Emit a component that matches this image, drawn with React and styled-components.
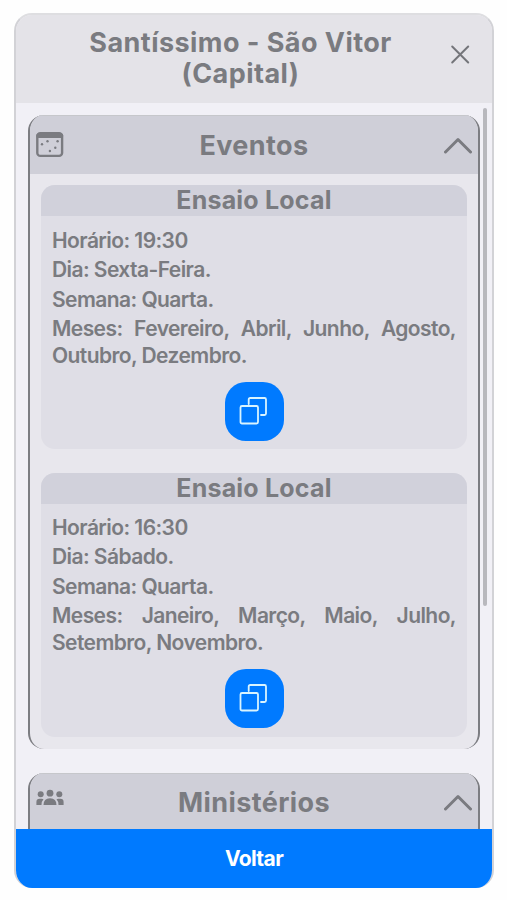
import React from 'react';
import styled, { createGlobalStyle } from 'styled-components';

const GlobalStyle = createGlobalStyle`
  *, *::before, *::after { box-sizing: border-box; }
  body {
    margin: 0;
    background: #fefefe;
    color: #7a7b80;
    font-family: Inter, "Liberation Sans", sans-serif;
  }
  h1, h2, h3, p { margin: 0; }
  button { font-family: inherit; border: 0; padding: 0; cursor: pointer; }
`;

const Page = styled.main`
  height: 900px;
  padding: 13px 13px 12px 14px;
`;

const Modal = styled.section`
  display: flex;
  flex-direction: column;
  height: 875px;
  border: 2px solid #d2d2d6;
  border-top-color: #dedee1;
  border-bottom-width: 0;
  border-radius: 18px;
  background: #f1f0f6;
  overflow: hidden;
`;

const ModalHeader = styled.header`
  display: grid;
  grid-template-columns: 1fr 24px;
  flex: none;
  align-items: center;
  height: 88px;
  padding: 0 20px 3px 43px;
  background: #e4e3e8;
`;

const ModalTitle = styled.h1`
  padding: 0 26px 0 0;
  font-size: 27px;
  font-weight: 700;
  line-height: 31px;
  letter-spacing: 0.45px;
  text-align: center;
`;

const CloseButton = styled.button`
  display: flex;
  width: 24px;
  height: 24px;
  margin-bottom: 7px;
  background: none;
  color: #75767b;
`;

const ModalBody = styled.div`
  display: grid;
  grid-template-columns: 1fr 5px;
  flex: 1;
  min-height: 0;
  padding: 0 4px 0 12px;
  column-gap: 3px;
  overflow: hidden;
`;

const Groups = styled.div`
  display: flex;
  flex-direction: column;
  gap: 24px;
  padding-top: 12px;
`;

const ScrollThumb = styled.div`
  width: 4px;
  height: 498px;
  margin-top: 5px;
  border-radius: 2px;
  background: #b8b8bd;
`;

const Group = styled.section`
  flex: none;
  border: solid #7c7d82;
  border-width: 0 2px;
  border-radius: 16px;
  background: #e8e7ed;
  overflow: hidden;
`;

const GroupHeader = styled.header`
  display: grid;
  grid-template-columns: 28px 1fr 28px;
  align-items: center;
  height: 59px;
  padding: ${({ $shift = 1 }) => $shift}px 6px 0;
  border-top: 1px solid #c6c7cb;
  background: #cfcfd8;
`;

const GroupTitle = styled.h2`
  font-size: 27px;
  font-weight: 700;
  line-height: 32px;
  letter-spacing: 0.4px;
  text-align: center;
`;

const Cards = styled.div`
  display: flex;
  flex-direction: column;
  gap: 24px;
  min-height: 40px;
  padding: 11px 11px 12px;
`;

const Card = styled.article`
  height: 264px;
  border-radius: 14px;
  background: #dfdee6;
  overflow: hidden;
`;

const CardTitle = styled.h3`
  height: 31px;
  background: #d1d1db;
  font-size: 25px;
  font-weight: 700;
  line-height: 31px;
  letter-spacing: 0.2px;
  text-align: center;
`;

const CardContent = styled.div`
  display: flex;
  flex-direction: column;
  align-items: center;
  gap: 13px;
  padding: 11px 11px 0;

  ${Card} + ${Card} & {
    padding-top: 10px;
  }
`;

const Details = styled.div`
  display: flex;
  flex-direction: column;
  gap: 2.3px;
  width: 100%;
`;

const Detail = styled.p`
  font-size: 21px;
  font-weight: 640;
  line-height: 27px;
  letter-spacing: -0.57px;
  text-align: justify;
`;

const CopyButton = styled.button`
  display: flex;
  align-items: center;
  justify-content: center;
  width: 59px;
  height: 59px;
  border-radius: 21px;
  background: #007aff;
  color: #d9f4ff;
`;

const BackButton = styled.button`
  flex: none;
  height: 59px;
  background: #007aff;
  color: #fff;
  font-size: 21px;
  font-weight: 700;
  letter-spacing: -0.6px;
`;

const Icon = styled.svg`
  display: block;
  fill: none;
  stroke: currentColor;
  stroke-width: ${({ $stroke = 2 }) => $stroke};
  stroke-linecap: round;
  stroke-linejoin: round;
`;

const CloseIcon = () => (
  <Icon width="24" height="24" viewBox="0 0 24 24">
    <path d="M4.2 4.5l16 16M20.2 4.5l-16 16" />
  </Icon>
);

const ChevronIcon = () => (
  <Icon width="28" height="20" viewBox="0 0 28 20" $stroke={3}>
    <path d="M1.5 16L14 3.5L26.5 16" />
  </Icon>
);

const CalendarIcon = () => (
  <Icon width="28" height="28" viewBox="0 1 28 28" $stroke={2.4}>
    <rect x="1.3" y="2.3" width="24.8" height="22.6" rx="3" />
    <path d="M2.5 4.8h22.6" strokeWidth="4.4" />
    <g fill="currentColor" stroke="none">
      <circle cx="6" cy="13.2" r="1.2" />
      <circle cx="11.5" cy="10.2" r="1.2" />
      <circle cx="21.6" cy="10.2" r="1.2" />
      <circle cx="19.3" cy="16.7" r="1.2" />
      <circle cx="13.9" cy="20" r="1.2" />
    </g>
  </Icon>
);

const PeopleSvg = styled.svg`
  display: block;
  margin-top: -10px;
  fill: currentColor;
`;

const PeopleIcon = () => (
  <PeopleSvg width="28" height="18" viewBox="0 0 28 18">
    <circle cx="4.7" cy="5.2" r="3" />
    <circle cx="14" cy="4.2" r="3.4" />
    <circle cx="23.3" cy="5.2" r="3" />
    <path d="M.4 16v-3.1q0-3.2 3.3-3.2h2.1l1.7.5q-2.1 2.1-2 5.8z" />
    <path d="M27.6 16v-3.1q0-3.2-3.3-3.2h-2.1l-1.7.5q2.1 2.1 2 5.8z" />
    <path d="M7.5 16q0-6.8 6.5-6.8t6.5 6.8z" />
  </PeopleSvg>
);

const CopyIcon = () => (
  <Icon width="30" height="30" viewBox="0 0 30 30" $stroke={1.8}>
    <rect x="1.5" y="10" width="17.5" height="17.5" rx="1.5" />
    <path d="M9.7 8V3.5q0-1.5 1.5-1.5H25.5q1.5 0 1.5 1.5v14q0 1.5-1.5 1.5h-3.5" />
  </Icon>
);

const events = [
  {
    time: '19:30',
    day: 'Sexta-Feira',
    week: 'Quarta',
    months: 'Fevereiro, Abril, Junho, Agosto, Outubro, Dezembro',
  },
  {
    time: '16:30',
    day: 'Sábado',
    week: 'Quarta',
    months: 'Janeiro, Março, Maio, Julho, Setembro, Novembro',
  },
];

const EventCard = ({ event }) => (
  <Card>
    <CardTitle>Ensaio Local</CardTitle>
    <CardContent>
      <Details>
        <Detail>{`Horário: ${event.time}`}</Detail>
        <Detail>{`Dia: ${event.day}.`}</Detail>
        <Detail>{`Semana: ${event.week}.`}</Detail>
        <Detail>{`Meses: ${event.months}.`}</Detail>
      </Details>
      <CopyButton aria-label="Copiar">
        <CopyIcon />
      </CopyButton>
    </CardContent>
  </Card>
);

export default function App() {
  return (
    <Page>
      <GlobalStyle />
      <Modal>
        <ModalHeader>
          <ModalTitle>Santíssimo - São Vitor (Capital)</ModalTitle>
          <CloseButton aria-label="Fechar">
            <CloseIcon />
          </CloseButton>
        </ModalHeader>
        <ModalBody>
          <Groups>
            <Group>
              <GroupHeader>
                <CalendarIcon />
                <GroupTitle>Eventos</GroupTitle>
                <ChevronIcon />
              </GroupHeader>
              <Cards>
                {events.map((event) => (
                  <EventCard key={event.time} event={event} />
                ))}
              </Cards>
            </Group>
            <Group>
              <GroupHeader $shift={0}>
                <PeopleIcon />
                <GroupTitle>Ministérios</GroupTitle>
                <ChevronIcon />
              </GroupHeader>
              <Cards />
            </Group>
          </Groups>
          <ScrollThumb />
        </ModalBody>
        <BackButton>Voltar</BackButton>
      </Modal>
    </Page>
  );
}
